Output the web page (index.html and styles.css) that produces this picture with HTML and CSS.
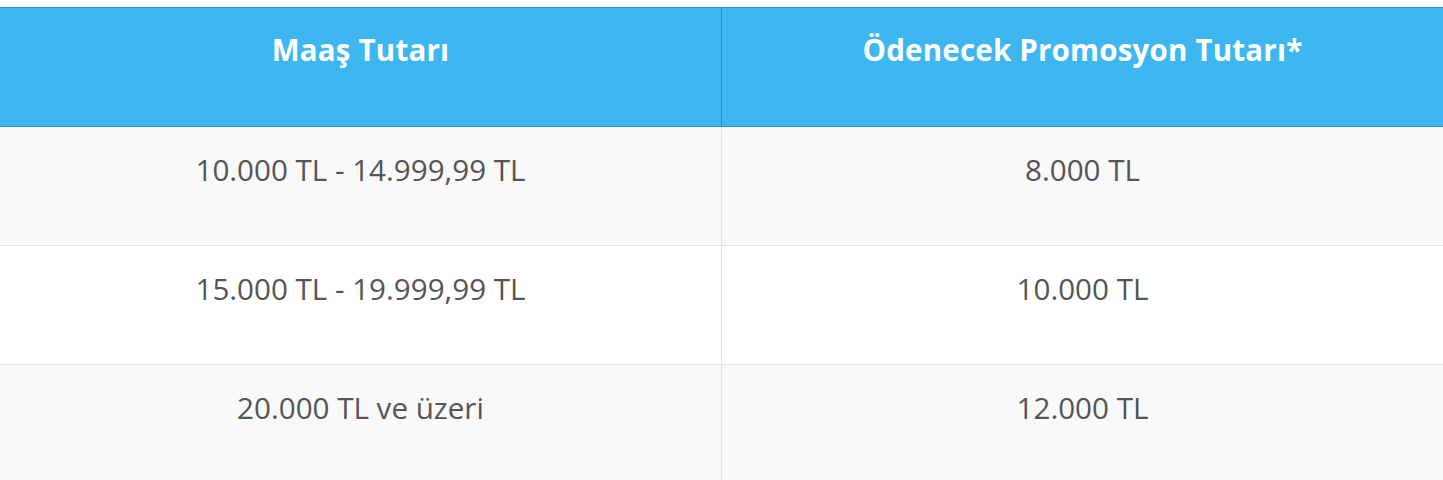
FILE: index.html
```html
<!DOCTYPE html>
<html lang="tr">
<head>
<meta charset="utf-8">
<link rel="stylesheet" href="styles.css">
</head>
<body>
<table class="promo">
  <thead>
    <tr><th>Maaş Tutarı</th><th>Ödenecek Promosyon Tutarı*</th></tr>
  </thead>
  <tbody>
    <tr class="odd"><td>10.000 TL - 14.999,99 TL</td><td>8.000 TL</td></tr>
    <tr><td>15.000 TL - 19.999,99 TL</td><td>10.000 TL</td></tr>
    <tr class="odd"><td>20.000 TL ve üzeri</td><td>12.000 TL</td></tr>
  </tbody>
</table>
</body>
</html>
```
FILE: styles.css
```css
html, body { margin: 0; padding: 0; background: #fff; }
body { padding-top: 7px; font-family: "Open Sans", "Noto Sans", sans-serif; }
.promo { width: 100%; border-collapse: collapse; table-layout: fixed; }
.promo th {
  background: #3eb7f0;
  color: #fff;
  font-weight: 700;
  font-size: 29.5px;
  letter-spacing: 0.2px;
  height: 119px;
  box-sizing: border-box;
  padding: 24px 0 0;
  vertical-align: top;
  line-height: 36px;
  border-top: 1px solid #2a8fc4;
  border-bottom: 1px solid #2a8fc4;
  border-left: 1px solid #2a8fc4;
}
.promo th:first-child { border-left: none; }
.promo td {
  color: #555;
  font-size: 29.6px;
  height: 119px;
  box-sizing: border-box;
  padding: 24px 0 0;
  vertical-align: top;
  text-align: center;
  line-height: 38px;
  border-bottom: 1px solid #e3e3e3;
  border-left: 1px solid #e3e3e3;
}
.promo td:first-child { border-left: none; }
.promo tr.odd td { background: #f9f9f9; }
```
